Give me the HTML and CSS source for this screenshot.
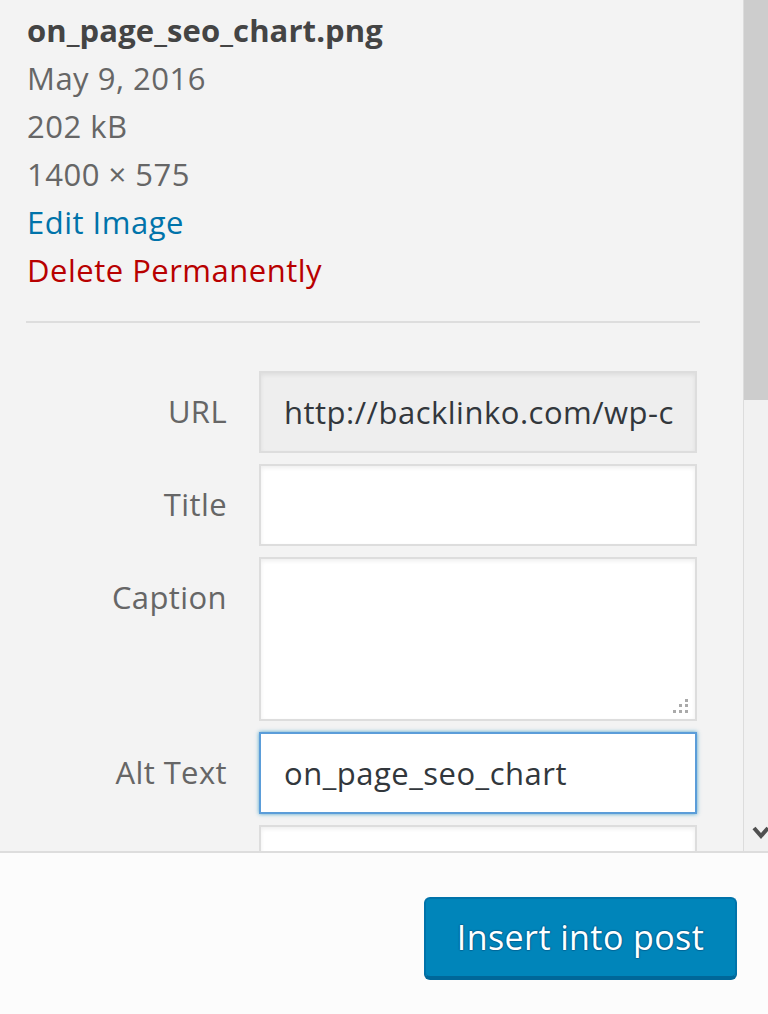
FILE: index.html
```html
<!DOCTYPE html>
<html>
<head>
<meta charset="utf-8">
<link rel="stylesheet" href="styles.css">
</head>
<body>
<div class="frame">
  <div class="main">
    <div class="content">
      <div class="details">
        <div class="filename">on_page_seo_chart.png</div>
        <div class="meta">May 9, 2016</div>
        <div class="meta">202 kB</div>
        <div class="meta">1400 × 575</div>
        <div class="link edit">Edit Image</div>
        <div class="link delete">Delete Permanently</div>
      </div>
      <div class="divider"></div>
      <div class="form">
        <div class="label">URL</div>
        <div class="field readonly">http://backlinko.com/wp-c</div>
        <div class="label">Title</div>
        <div class="field"></div>
        <div class="label">Caption</div>
        <div class="field textarea">
          <svg class="grip" width="16" height="16" viewBox="0 0 16 16">
            <rect x="13" y="1" width="3" height="3" fill="#aaa"/>
            <rect x="7" y="6" width="3" height="3" fill="#aaa"/>
            <rect x="13" y="6" width="3" height="3" fill="#aaa"/>
            <rect x="1" y="12" width="3" height="3" fill="#aaa"/>
            <rect x="7" y="12" width="3" height="3" fill="#aaa"/>
            <rect x="13" y="12" width="3" height="3" fill="#aaa"/>
          </svg>
        </div>
        <div class="label">Alt Text</div>
        <div class="field focus">on_page_seo_chart</div>
        <div class="label"></div>
        <div class="field"></div>
      </div>
    </div>
    <div class="scrollbar">
      <div class="thumb"></div>
      <div class="track">
        <svg class="arrow" width="18" height="16" viewBox="0 0 18 16">
          <polyline points="2,3 9,11 16,3" fill="none" stroke="#505050" stroke-width="4"/>
        </svg>
      </div>
    </div>
  </div>
  <div class="footer">
    <div class="button">Insert into post</div>
  </div>
</div>
</body>
</html>
```
FILE: styles.css
```css
html, body {
  margin: 0;
  padding: 0;
}
body {
  width: 768px;
  height: 1014px;
  overflow: hidden;
  background: #fcfcfc;
  font-family: "Open Sans", "Noto Sans", sans-serif;
}
.frame {
  display: grid;
  grid-template-rows: 851px 1fr;
  height: 1014px;
}
.main {
  display: flex;
  background: #f3f3f3;
  overflow: hidden;
}
.content {
  flex: 1;
  padding: 6px 0 0 27px;
  overflow: hidden;
}
.details {
  font-size: 31px;
  line-height: 48px;
  letter-spacing: 0.5px;
}
.filename {
  font-weight: 700;
  color: #444;
  letter-spacing: 0.1px;
}
.meta {
  color: #666;
}
.edit {
  color: #0073aa;
}
.delete {
  color: #b80000;
}
.divider {
  width: 674px;
  height: 2px;
  background: #ddd;
  margin: 27px 0 0 -1px;
}
.form {
  display: grid;
  grid-template-columns: 200px 438px;
  column-gap: 32px;
  row-gap: 11px;
  margin-top: 48px;
}
.label {
  text-align: right;
  color: #666;
  font-size: 31px;
  line-height: 80px;
  letter-spacing: 0.4px;
}
.field {
  position: relative;
  box-sizing: border-box;
  height: 82px;
  background: #fff;
  border: 2px solid #ddd;
  box-shadow: inset 0 2px 4px rgba(0, 0, 0, 0.07);
  padding-left: 23px;
  font-size: 31px;
  line-height: 78px;
  color: #32373c;
  letter-spacing: 0.5px;
  white-space: nowrap;
  overflow: hidden;
}
.readonly {
  background: #eee;
}
.textarea {
  height: 164px;
}
.focus {
  border-color: #5b9dd9;
  box-shadow: 0 0 4px rgba(30, 140, 190, 0.8);
}
.grip {
  position: absolute;
  right: 7px;
  bottom: 5px;
}
.scrollbar {
  width: 24px;
  border-left: 1px solid #dcdcdc;
  background: #f1f1f1;
  display: flex;
  flex-direction: column;
}
.thumb {
  height: 400px;
  background: #cdcdcd;
}
.track {
  flex: 1;
  display: flex;
  align-items: flex-end;
  padding-bottom: 10px;
  padding-left: 8px;
}
.arrow {
  display: block;
  flex: none;
}
.footer {
  border-top: 2px solid #dddddd;
  background: #fcfcfc;
  display: flex;
  justify-content: flex-end;
  align-items: flex-start;
  padding: 44px 31px 0 0;
}
.button {
  box-sizing: border-box;
  width: 313px;
  height: 81px;
  background: #0085ba;
  border: 2px solid #0073aa;
  border-bottom-color: #006799;
  border-radius: 6px;
  box-shadow: 0 2px 0 #006799;
  color: #fff;
  font-size: 34px;
  line-height: 76px;
  text-align: center;
  letter-spacing: 0.4px;
  text-shadow: 0 -1px 1px #006799, 1px 0 1px #006799, 0 1px 1px #006799, -1px 0 1px #006799;
}
```
